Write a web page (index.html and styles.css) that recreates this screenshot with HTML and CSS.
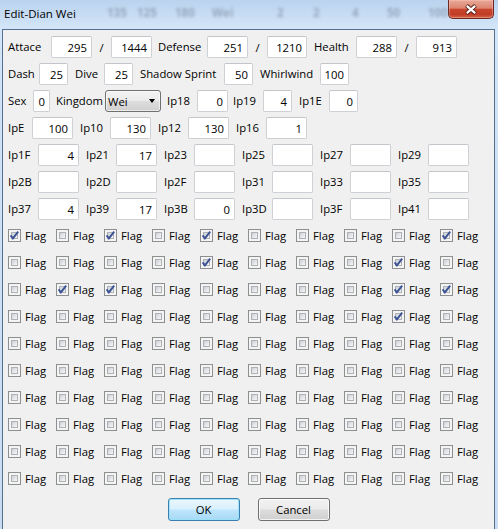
FILE: index.html
```html
<!DOCTYPE html>
<html>
<head>
<meta charset="utf-8">
<title>Edit-Dian Wei</title>
<link rel="stylesheet" href="styles.css">
</head>
<body>
<div class="window">
  <div class="titlebar">
    <span class="title">Edit-Dian Wei</span>
    <span class="ghost gw30">135</span>
    <span class="ghost gw38">125</span>
    <span class="ghost gw37">180</span>
    <span class="ghost gw65">Wei</span>
    <span class="ghost gw36">2</span>
    <span class="ghost gw39">2</span>
    <span class="ghost gw35">4</span>
    <span class="ghost gw41">50</span>
    <span class="ghost gw20">100</span>
    <div class="close">
      <svg width="44" height="17" viewBox="0 0 44 17">
        <path d="M17.5 4.5 L26.5 12.5 M26.5 4.5 L17.5 12.5" stroke="#4b1c16" stroke-width="4" fill="none"/>
        <path d="M17.8 4.8 L26.2 12.2 M26.2 4.8 L17.8 12.2" stroke="#ffffff" stroke-width="2.2" fill="none"/>
      </svg>
    </div>
  </div>
  <div class="client">
    <div class="row">
      <span class="lab w43">Attace</span><span class="tb w41">295</span><span class="slash">/</span><span class="tb w41">1444</span>
      <span class="lab g6 w49">Defense</span><span class="tb w41">251</span><span class="slash">/</span><span class="tb w40">1210</span>
      <span class="lab g7 w42">Health</span><span class="tb w41">288</span><span class="slash">/</span><span class="tb w41">913</span>
    </div>
    <div class="row">
      <span class="lab w31">Dash</span><span class="tb w29">25</span>
      <span class="lab g7 w29">Dive</span><span class="tb w29">25</span>
      <span class="lab g7 w84">Shadow Sprint</span><span class="tb w29">50</span>
      <span class="lab g7 w60">Whirlwind</span><span class="tb w29">100</span>
    </div>
    <div class="row">
      <span class="lab w25">Sex</span><span class="tb w17">0</span>
      <span class="lab g6 w49">Kingdom</span><span class="select"><span class="seltext">Wei</span><span class="arrow"></span></span>
      <span class="lab g6 w30">Ip18</span><span class="tb w31">0</span>
      <span class="lab g5 w30">Ip19</span><span class="tb w29">4</span>
      <span class="lab g7 w30">Ip1E</span><span class="tb w29">0</span>
    </div>
    <div class="row">
      <span class="lab w24">IpE</span><span class="tb w41">100</span>
      <span class="lab g7 w30">Ip10</span><span class="tb w41">130</span>
      <span class="lab g7 w30">Ip12</span><span class="tb w41">130</span>
      <span class="lab g7 w30">Ip16</span><span class="tb w41">1</span>
    </div>
    <div class="row grid6">
      <div class="cell"><span class="lab w30">Ip1F</span><span class="tb w41">4</span></div>
      <div class="cell"><span class="lab w30">Ip21</span><span class="tb w41">17</span></div>
      <div class="cell"><span class="lab w30">Ip23</span><span class="tb w41"></span></div>
      <div class="cell"><span class="lab w30">Ip25</span><span class="tb w41"></span></div>
      <div class="cell"><span class="lab w30">Ip27</span><span class="tb w41"></span></div>
      <div class="cell"><span class="lab w30">Ip29</span><span class="tb w41"></span></div>
    </div>
    <div class="row grid6">
      <div class="cell"><span class="lab w30">Ip2B</span><span class="tb w41"></span></div>
      <div class="cell"><span class="lab w30">Ip2D</span><span class="tb w41"></span></div>
      <div class="cell"><span class="lab w30">Ip2F</span><span class="tb w41"></span></div>
      <div class="cell"><span class="lab w30">Ip31</span><span class="tb w41"></span></div>
      <div class="cell"><span class="lab w30">Ip33</span><span class="tb w41"></span></div>
      <div class="cell"><span class="lab w30">Ip35</span><span class="tb w41"></span></div>
    </div>
    <div class="row grid6">
      <div class="cell"><span class="lab w30">Ip37</span><span class="tb w41">4</span></div>
      <div class="cell"><span class="lab w30">Ip39</span><span class="tb w41">17</span></div>
      <div class="cell"><span class="lab w30">Ip3B</span><span class="tb w41">0</span></div>
      <div class="cell"><span class="lab w30">Ip3D</span><span class="tb w41"></span></div>
      <div class="cell"><span class="lab w30">Ip3F</span><span class="tb w41"></span></div>
      <div class="cell"><span class="lab w30">Ip41</span><span class="tb w41"></span></div>
    </div>
    <div id="flags" class="flags"></div>
    <div class="buttons">
      <span class="btn btn-ok">OK</span>
      <span class="btn">Cancel</span>
    </div>
  </div>
</div>
<script src="script.js"></script>
</body>
</html>
```

FILE: script.js
```js
(function () {
  var rows = [
    "1010100001",
    "0000100010",
    "0110000011",
    "0000000010",
    "0000000000",
    "0000000000",
    "0000000000",
    "0000000000",
    "0000000000",
    "0000000000"
  ];
  var host = document.getElementById("flags");
  var check = '<svg class="tick" width="13" height="13" viewBox="0 0 13 13"><path d="M2.6 6.4 L4.9 9.4 L10.2 2.6" stroke="#3b5394" stroke-width="1.9" fill="none" stroke-linejoin="miter"/></svg>';
  rows.forEach(function (r) {
    var row = document.createElement("div");
    row.className = "row flagrow";
    var html = "";
    for (var i = 0; i < r.length; i++) {
      html += '<label class="flag"><span class="cb">' +
        '<span class="cbin"></span>' + (r[i] === "1" ? check : "") +
        '</span><span class="flagtext">Flag</span></label>';
    }
    row.innerHTML = html;
    host.appendChild(row);
  });
})();
```

FILE: styles.css
```css
* { box-sizing: border-box; }
html, body { margin: 0; padding: 0; }
body {
  width: 498px;
  height: 529px;
  overflow: hidden;
  background: #c9ddf3;
  font-family: "Open Sans", "Noto Sans", "DejaVu Sans", sans-serif;
  font-size: 11.3px;
  color: #000;
}
.window {
  display: flex;
  flex-direction: column;
  height: 529px;
  background: linear-gradient(to bottom, #bad3ee 0px, #d3e5f8 28px, #cfe2f6 120px, #c8dcf2 529px);
}
.titlebar {
  height: 29px;
  flex: none;
  display: flex;
  align-items: flex-start;
}
.title {
  width: 107px;
  padding-left: 4px;
  line-height: 27px;
  font-size: 11.5px;
  color: #000;
  flex: none;
}
.ghost {
  flex: none;
  line-height: 25px;
  font-size: 11.5px;
  font-weight: 700;
  color: rgba(80, 92, 115, 0.4);
  filter: blur(1.4px);
}
.gw20 { width: 20px; }
.gw30 { width: 30px; }
.gw35 { width: 35px; }
.gw36 { width: 36px; }
.gw37 { width: 37px; }
.gw38 { width: 38px; }
.gw39 { width: 39px; }
.gw41 { width: 41px; }
.gw65 { width: 65px; }
.close {
  flex: none;
  width: 46px;
  height: 19px;
  margin-right: 4px;
  border: 1px solid #6d2a22;
  border-top: none;
  border-radius: 0 0 5px 5px;
  background: linear-gradient(to bottom, #e9a998 0%, #dc8570 45%, #c9452c 52%, #c13c25 80%, #d4684c 100%);
  box-shadow: inset 0 0 0 1px rgba(255, 210, 200, 0.35);
  display: flex;
  align-items: center;
  justify-content: center;
}
.client {
  flex: 1;
  margin: 0 3px 0 2px;
  border: 1px solid #55708f;
  border-bottom: none;
  background: #f0f0f0;
  padding: 6px 0 0 5px;
  display: flex;
  flex-direction: column;
  gap: 5px;
}
.row {
  display: flex;
  align-items: center;
  height: 22px;
  flex: none;
}
.lab {
  flex: none;
  white-space: nowrap;
  line-height: 22px;
}
.g5 { margin-left: 5px; }
.g6 { margin-left: 6px; }
.g7 { margin-left: 7px; }
.w17 { width: 17px; }
.w24 { width: 24px; }
.w25 { width: 25px; }
.w29 { width: 29px; }
.w30 { width: 30px; }
.w31 { width: 31px; }
.w40 { width: 40px; }
.w41 { width: 41px; }
.w42 { width: 42px; }
.w43 { width: 43px; }
.w49 { width: 49px; }
.w60 { width: 60px; }
.w84 { width: 84px; }
.tb {
  flex: none;
  height: 22px;
  background: #fff;
  border: 1px solid #cdd0d4;
  border-top-color: #c2c5ca;
  border-radius: 2px;
  display: flex;
  align-items: center;
  justify-content: flex-end;
  padding-right: 4px;
  white-space: nowrap;
  overflow: hidden;
}
.slash {
  flex: none;
  width: 19px;
  text-align: center;
}
.select {
  flex: none;
  width: 56px;
  height: 22px;
  border: 1px solid #707070;
  border-radius: 3px;
  background: linear-gradient(to bottom, #f3f3f3 0%, #ebebeb 48%, #dddddd 52%, #d0d0d0 100%);
  box-shadow: inset 0 0 0 1px rgba(255, 255, 255, 0.6);
  display: flex;
  align-items: center;
  padding-left: 2px;
}
.seltext { flex: none; }
.arrow {
  margin-left: auto;
  margin-right: 5px;
  width: 0;
  height: 0;
  border-left: 3.5px solid transparent;
  border-right: 3.5px solid transparent;
  border-top: 4px solid #000;
}
.grid6 {
  display: grid;
  grid-template-columns: repeat(6, 71px);
  column-gap: 7px;
}
.cell {
  display: flex;
  align-items: center;
}
.flags {
  display: flex;
  flex-direction: column;
  gap: 5px;
}
.flagrow {
  display: grid;
  grid-template-columns: repeat(10, 48px);
}
.flag {
  display: flex;
  align-items: center;
  gap: 4px;
}
.cb {
  position: relative;
  flex: none;
  width: 13px;
  height: 13px;
  border: 1px solid #8e8f8f;
  background: #f4f4f4;
  padding: 2px;
  margin-top: -1px;
}
.cbin {
  display: block;
  width: 7px;
  height: 7px;
  border: 1px solid #aeb2b7;
  background: linear-gradient(135deg, #cbcfd5 0%, #e3e5e8 50%, #f6f6f6 100%);
}
.tick {
  position: absolute;
  left: -1px;
  top: -1px;
}
.flagtext { line-height: 22px; }
.buttons {
  display: flex;
  justify-content: center;
  gap: 18px;
  margin: 3px 0 0 -5px;
}
.btn {
  width: 72px;
  height: 23px;
  border: 1px solid #707070;
  border-radius: 3px;
  background: linear-gradient(to bottom, #f2f2f2 0%, #ebebeb 48%, #dddddd 52%, #cfcfcf 100%);
  box-shadow: inset 0 0 0 1px rgba(255, 255, 255, 0.75);
  display: flex;
  align-items: center;
  justify-content: center;
}
.btn-ok {
  border-color: #3c7fb1;
  background: linear-gradient(to bottom, #eaf6fd 0%, #d9f0fc 48%, #bee6fd 52%, #a7d9f5 100%);
  box-shadow: inset 0 0 0 1px rgba(150, 225, 250, 0.9);
}
```
